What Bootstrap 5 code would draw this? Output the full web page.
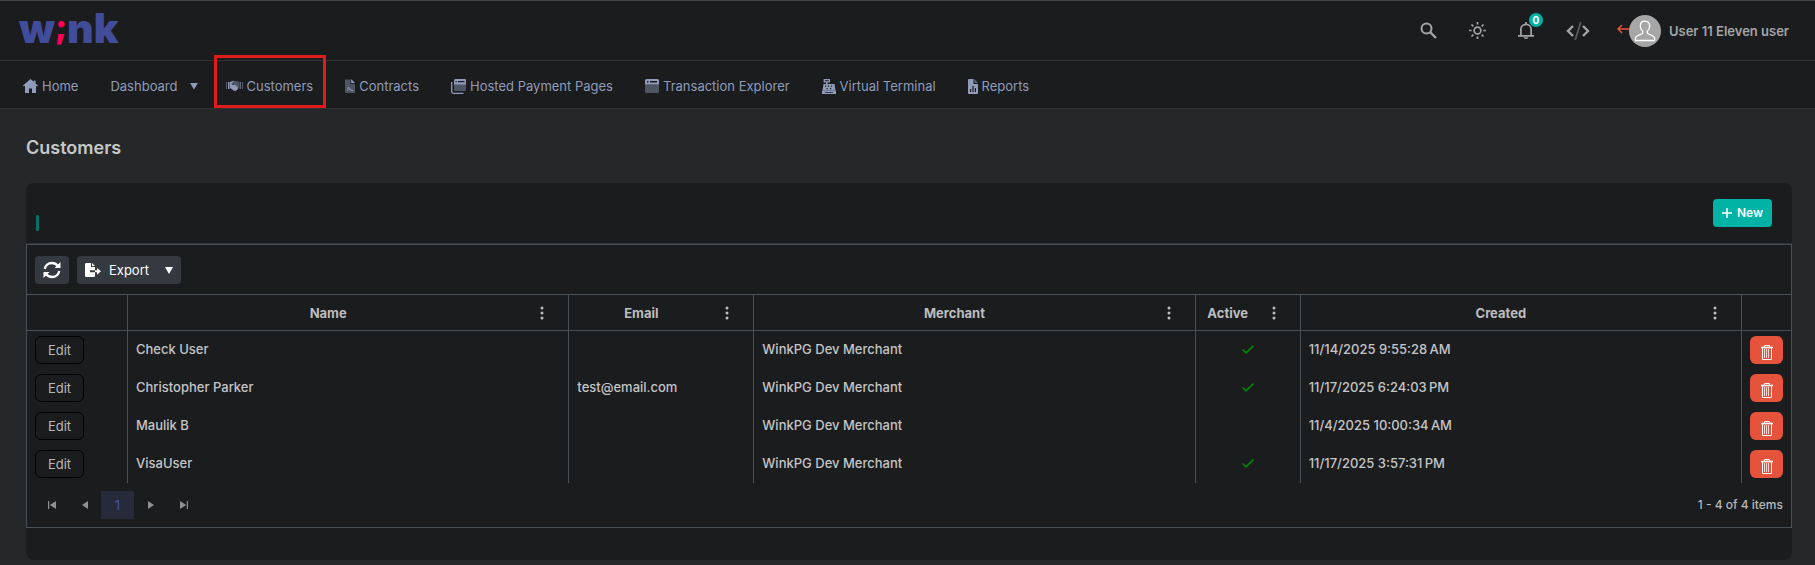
<!DOCTYPE html>
<html lang="en" data-bs-theme="dark">
<head>
<meta charset="utf-8">
<meta name="viewport" content="width=device-width, initial-scale=1">
<title>Customers</title>
<link href="https://cdn.jsdelivr.net/npm/bootstrap@5.3.0/dist/css/bootstrap.min.css" rel="stylesheet">
<style>
  :root { --panel: #1b1c1e; --page: #262729; --line: #2f3133; --grid: #495057; --ink: #b8b9ba; --nav: #8f9bb8; }
  body { background: var(--page); color: var(--ink); font-family: Inter, "Liberation Sans", sans-serif; font-size: 13px; line-height: 20px; }
  button { font-family: inherit; }
  svg { display: block; flex: none; }
  .topbar { background: var(--panel); border-top: 1px solid #434547; border-bottom: 1px solid var(--line); height: 61px; padding: 0 26px 0 19px; }
  .brand { font: 900 41px/48px Inter, sans-serif; color: #414c9b; text-decoration: none; padding-bottom: 6px; }
  .brand span { color: #ff0055; font-size: 32px; line-height: 32px; vertical-align: 5px; }
  .tool { background: none; border: 0; padding: 0; color: #a3a5a7; position: relative; }
  .tools { gap: 32px; margin-right: 27px; }
  .count { position: absolute; top: -9px; left: 11px; width: 14px; height: 14px; border-radius: 50%; background: #00b3a4; color: #fff; font-size: 10px; font-weight: 700; line-height: 14px; text-align: center; }
  .avatar { width: 32px; height: 32px; border-radius: 50%; background: #a6a6a6; color: #fff; }
  .username { color: #a3a5a7; font-weight: 600; }
  .mainnav { background: var(--panel); border-bottom: 1px solid var(--line); height: 48px; padding: 0 7px; }
  .mainnav .nav-link { color: var(--nav); padding: 3px 16px 0; height: 47px; gap: 4px; position: relative; white-space: nowrap; }
  .mainnav .has-menu { padding-right: 12px; }
  .marker { position: absolute; inset: -6px 3px 0 4px; border: 3px solid #e01b1b; }
  h1 { font-size: 18px; line-height: 26px; font-weight: 600; color: #c6c7c8; margin-bottom: 22px; }
  .page { padding: 26px 23px 5px 26px; }
  .panel { background: var(--panel); border-radius: 8px; padding-bottom: 32px; }
  .panel-top { height: 61px; border-bottom: 1px solid var(--line); padding: 16px 20px 12px 10px; }
  .caretbar { width: 3px; height: 16px; background: #0d6e66; border-radius: 1px; }
  .btn { --bs-btn-font-size: 13px; --bs-btn-line-height: 20px; --bs-btn-padding-y: 3px; --bs-btn-border-radius: 4px; height: 28px; }
  .btn-new { background: #00b3a4; color: #fff; font-weight: 600; font-size: 12px; padding: 0 9px 0 8px; gap: 4px; border: 0; }
  .btn-grey { background: #343a40; color: #fff; border: 0; }
  .btn-edit { border: 1px solid #000; border-radius: 6px; color: var(--ink); width: 49px; padding: 3px 0; }
  .btn-del { background: #e6533c; color: #fff; border: 0; border-radius: 6px; width: 33px; padding: 4px 0 0; }
  .data { border: 1px solid var(--grid); }
  .data-tools { height: 49px; padding: 11px 8px; gap: 8px; }
  .data table { table-layout: fixed; width: 100%; border-collapse: separate; border-spacing: 0; }
  .data th { height: 37px; border: solid var(--grid); border-width: 1px 1px 1px 0; padding: 0 8px; font-weight: 700; color: #bcbdbe; }
  .data td { height: 38px; border-right: 1px solid var(--grid); padding: 0 8px; font-weight: 500; color: #c4c5c6; white-space: nowrap; }
  .data th:last-child, .data td:last-child { border-right: 0; }
  .data td p { margin: 0 0 2px; }
  .w-edit { width: 101px; } .w-mail { width: 185px; } .w-act { width: 105px; } .w-del { width: 49px; }
  .dots { width: 28px; height: 28px; margin-right: 4px; padding: 0; background: none; border: 0; color: #bcbdbe; }
  .pager { height: 44px; padding: 8px 8px; }
  .pg { width: 33px; height: 28px; border: 0; padding: 0; background: none; color: #8e9091; }
  .pg.on { background: #272a3a; color: #4454a8; font-size: 13px; }
  .total { font-weight: 500; font-size: 12px; }
</style>
</head>
<body>
<header class="topbar d-flex align-items-center">
  <a class="brand me-auto" href="#">w<span>;</span>nk</a>
  <div class="tools d-flex align-items-center">
    <button class="tool" type="button" aria-label="Search"><svg width="17" height="17" viewBox="0 0 17 17" fill="none" stroke="currentColor" stroke-width="2"><circle cx="6.500" cy="6.500" r="5"/><path d="M10 10l6 6" stroke-width="2.400"/></svg></button>
    <button class="tool" type="button" aria-label="Theme"><svg width="17" height="17" viewBox="0 0 17 17" fill="none" stroke="currentColor" stroke-width="1.700"><circle cx="8.500" cy="8.500" r="3.400"/><path d="M8.500 0v2.600M8.500 14.400V17M0 8.500h2.600M14.400 8.500H17M2.500 2.500l1.800 1.800M12.700 12.700l1.800 1.800M2.500 14.500l1.800-1.800M12.700 4.300l1.800-1.800"/></svg></button>
    <button class="tool" type="button" aria-label="Notifications"><svg width="16" height="17" viewBox="0 0 16 17" fill="none" stroke="currentColor" stroke-width="1.700"><path d="M0 13.800h16M2.900 13V7.200C2.900 4.500 5 2.300 8 2.300s5.100 2.200 5.100 4.900V13"/><path d="M8 0v2"/><path d="M5.700 15.300h4.600c-.2 1-1 1.700-2.300 1.700s-2.100-.7-2.300-1.700z" fill="currentColor" stroke="none"/></svg><span class="count">0</span></button>
    <button class="tool" type="button" aria-label="Developer"><svg width="24" height="20" viewBox="0 0 24 20" fill="none" stroke="currentColor" stroke-width="2.400"><path d="M7 5l-5 5 5 5M17 5l5 5-5 5"/><path d="M14.800 1L9.200 19" stroke-width="1.800" opacity=".45"/></svg></button>
  </div>
  <div class="d-flex align-items-center">
    <a class="pb-1" href="#" aria-label="Sign out"><svg width="12" height="10" viewBox="0 0 12 10" fill="none" stroke="#e6533c" stroke-width="1.500"><path d="M12 5H1M5 1L1 5l4 4"/></svg></a>
    <span class="avatar d-flex align-items-center justify-content-center me-2"><svg width="22" height="22" viewBox="0 0 22 22" fill="none" stroke="currentColor" stroke-width="1.300"><path d="M11 1.200c-3 0-4.700 2-4.700 4.800 0 2.300 1 4.200 2.400 5.200v1.900c-.2 1-6.500 1.900-7.200 4.700-.3 1.200-.3 2 0 2.700h19c.3-.7.3-1.500 0-2.700-.7-2.800-7-3.700-7.200-4.700v-1.900c1.400-1 2.400-2.900 2.400-5.200 0-2.800-1.700-4.800-4.700-4.800z"/></svg></span>
    <span class="username">User 11 Eleven user</span>
  </div>
</header>

<nav class="mainnav nav flex-nowrap">
  <a class="nav-link d-flex align-items-center" href="#"><svg width="15" height="14" viewBox="0 0 15 14" fill="currentColor"><path d="M7.500 0L0 6.600l.9 1L2 6.800V14h4V9.500h3V14h4V6.800l1.100.8.9-1-2.500-2.200V1.500h-1.700v1.300z"/></svg>Home</a>
  <a class="nav-link has-menu d-flex align-items-center" href="#">Dashboard<svg class="ms-2" width="8" height="7" viewBox="0 0 8 7" fill="currentColor"><path d="M0 0h8L4 6.500z"/></svg></a>
  <a class="nav-link d-flex align-items-center" href="#"><svg width="17" height="12" viewBox="0 0 17 12" fill="currentColor"><path d="M0 2h1v7H0zM16 2h1v7h-1z" opacity=".5"/><path d="M13.500 2H15v7h-1.500z" opacity=".6"/><path d="M2 2h1.500v7H2z"/><path d="M4 2l3-1.500L9 1l3 .2 1 1V8l-2-1L8 4 6 5z" opacity=".45"/><path d="M4 2l4-1-3 3 2 1.200 1.500-1L12.500 8 10 11 8 10.800 4 8z"/></svg>Customers<span class="marker"></span></a>
  <a class="nav-link d-flex align-items-center" href="#"><svg width="10" height="14" viewBox="0 0 10 14" fill="currentColor"><path d="M0 1.500Q0 .500 1 .500h4.500V5H10v8q0 1-1 1H1q-1 0-1-1z" opacity=".45"/><path d="M6.200 0L10 4H6.200z"/><path d="M2.500 11.500l1-3.500 1 2.500 1-.5.600 1.500H8" fill="none" stroke="currentColor"/></svg>Contracts</a>
  <a class="nav-link d-flex align-items-center" href="#"><svg width="15" height="15" viewBox="0 0 15 15" fill="currentColor"><path d="M3 5h12v6q0 1-1 1H4q-1 0-1-1z" opacity=".45"/><path d="M4.500 0H14q1 0 1 1v4.500H3V1.500Q3 0 4.500 0zM4.500 2v1.200h1.200V2zM7 2v1.200h6.500V2z" fill-rule="evenodd"/><path d="M.700 3v9.500q0 1.800 1.800 1.800H12.500" fill="none" stroke="currentColor" stroke-width="1.300"/></svg>Hosted Payment Pages</a>
  <a class="nav-link d-flex align-items-center" href="#"><svg width="14" height="14" viewBox="0 0 14 14" fill="currentColor"><path d="M0 5.500h14V13q0 1-1 1H1q-1 0-1-1z" opacity=".45"/><path d="M1.500 0h11Q14 0 14 1.500v4H0v-4Q0 0 1.500 0zM2 2v1.400h1.400V2zM5 2v1.400h7V2z" fill-rule="evenodd"/></svg>Transaction Explorer</a>
  <a class="nav-link d-flex align-items-center" href="#"><svg width="14" height="15" viewBox="0 0 14 15" fill="currentColor"><path d="M1.600 0H8v3.400H5.500V5H12.500l1 6.500H.500l1-6.500H4V3.400H1.600zM3 1.200v1h3.700v-1zM3 6.500v1.300h1.200V6.500zm3 0v1.300h1.200V6.500zm3 0v1.300h1.200V6.500zM4.500 9v1.200h1.200V9zm3.500 0v1.200h1.200V9z" fill-rule="evenodd"/><path d="M0 11.500h14V15H0zM3 13v.8h8V13z" fill-rule="evenodd"/></svg>Virtual Terminal</a>
  <a class="nav-link d-flex align-items-center" href="#"><svg width="10" height="15" viewBox="0 0 10 15" fill="currentColor"><path d="M1 0h4.500v5H10v9q0 1-1 1H1q-1 0-1-1V1q0-1 1-1zM2 10v3h1.200v-3zm2.400-3v6h1.200V7zm2.400 2v4H8V9z" fill-rule="evenodd"/><path d="M6.500 0L10 4H6.500z" opacity=".6"/></svg>Reports</a>
</nav>

<main class="page">
  <h1>Customers</h1>
  <section class="panel">
    <div class="panel-top d-flex justify-content-between">
      <span class="caretbar align-self-end"></span>
      <button class="btn btn-new d-flex align-items-center" type="button"><svg width="12" height="12" viewBox="0 0 12 12" stroke="currentColor" stroke-width="1.500"><path d="M6 1v10M1 6h10"/></svg>New</button>
    </div>
    <div class="data">
      <div class="data-tools d-flex">
        <button class="btn btn-grey d-flex align-items-center justify-content-center px-2" type="button" aria-label="Refresh"><svg width="18" height="18" viewBox="0 0 18 18" fill="none" stroke="currentColor" stroke-width="2.300"><path d="M1.800 8C2.300 4.500 5.200 2 9 2c2.600 0 4.700 1.200 6.200 3.400M16.200 10c-.5 3.500-3.400 6-7.200 6-2.600 0-4.700-1.200-6.200-3.400"/><path d="M17.500 1v6h-6zM.500 17v-6h6z" fill="currentColor" stroke="none"/></svg></button>
        <button class="btn btn-grey d-flex align-items-center px-2" type="button"><svg class="me-2" width="16" height="14" viewBox="0 0 16 14" fill="currentColor"><path d="M1.200 0H6v4h4v3.300H5v2h5V12.800Q10 14 8.800 14H1.200Q0 14 0 12.800V1.200Q0 0 1.200 0zM7 0l3 3H7z"/><path d="M10 7.300h2V5l4 3.300-4 3.400V9.300h-2z"/></svg>Export<svg class="ms-3" width="8" height="7" viewBox="0 0 8 7" fill="currentColor"><path d="M0 0h8L4 7z"/></svg></button>
      </div>
      <table>
        <colgroup><col class="w-edit"><col><col class="w-mail"><col><col class="w-act"><col><col class="w-del"></colgroup>
        <thead><tr id="heads"></tr></thead>
        <tbody id="rows"></tbody>
      </table>
      <div class="pager d-flex align-items-center justify-content-between">
        <div class="d-flex">
          <button class="pg d-flex align-items-center justify-content-center" type="button" aria-label="First page"><svg width="8" height="8" viewBox="0 0 8 8" fill="currentColor"><path d="M0 0h1.200v8H0zM8 0v8L1.800 4z"/></svg></button>
          <button class="pg d-flex align-items-center justify-content-center" type="button" aria-label="Previous page"><svg width="6" height="8" viewBox="0 0 6 8" fill="currentColor"><path d="M6 0v8L0 4z"/></svg></button>
          <button class="pg on" type="button">1</button>
          <button class="pg d-flex align-items-center justify-content-center" type="button" aria-label="Next page"><svg width="6" height="8" viewBox="0 0 6 8" fill="currentColor"><path d="M0 0v8l6-4z"/></svg></button>
          <button class="pg d-flex align-items-center justify-content-center" type="button" aria-label="Last page"><svg width="8" height="8" viewBox="0 0 8 8" fill="currentColor"><path d="M6.800 0H8v8H6.800zM0 0v8l6.200-4z"/></svg></button>
        </div>
        <span class="total">1 - 4 of 4 items</span>
      </div>
    </div>
  </section>
</main>
<script src="https://cdn.jsdelivr.net/npm/bootstrap@5.3.0/dist/js/bootstrap.bundle.min.js"></script>
<script>
  const dots = '<svg width="4" height="14" viewBox="0 0 4 14" fill="currentColor"><circle cx="2" cy="2" r="1.500"/><circle cx="2" cy="7" r="1.500"/><circle cx="2" cy="12" r="1.500"/></svg>';
  const check = '<svg class="mx-auto" width="12" height="9" viewBox="0 0 12 9" fill="none" stroke="#008a00" stroke-width="1.500"><path d="M.600 4.500l3.400 3.400L11.400.600"/></svg>';
  const trash = '<svg class="mx-auto" width="12" height="15" viewBox="0 0 12 15" fill="none" stroke="currentColor"><path d="M3.500 2V.500h5V2"/><path d="M0 2.500h12" stroke-width="1.600"/><path d="M1.500 3v11.500h9V3"/><path d="M3.500 4v9M5.500 4v9M7.500 4v9" opacity=".75"/></svg>';
  document.getElementById('heads').innerHTML = ['', 'Name', 'Email', 'Merchant', 'Active', 'Created', ''].map(t => t
    ? `<th scope="col"><div class="d-flex align-items-center gap-2"><span class="flex-fill text-center">${t}</span><button class="dots d-flex align-items-center justify-content-center" type="button" aria-label="${t} column menu">${dots}</button></div></th>`
    : '<th></th>').join('');
  document.getElementById('rows').innerHTML = [
    ['Check User', '', true, '11/14/2025 9:55:28\u202fAM'],
    ['Christopher Parker', 'test@email.com', true, '11/17/2025 6:24:03\u202fPM'],
    ['Maulik B', '', false, '11/4/2025 10:00:34\u202fAM'],
    ['VisaUser', '', true, '11/17/2025 3:57:31\u202fPM']
  ].map(([name, mail, active, date]) => `<tr>
    <td><button class="btn btn-edit d-block" type="button">Edit</button></td>
    <td><p>${name}</p></td><td><p>${mail}</p></td><td><p>WinkPG Dev Merchant</p></td>
    <td><p>${active ? check : ''}</p></td><td><p>${date}</p></td>
    <td><button class="btn btn-del d-block" type="button" aria-label="Delete ${name}">${trash}</button></td></tr>`).join('');
</script>
</body>
</html>
